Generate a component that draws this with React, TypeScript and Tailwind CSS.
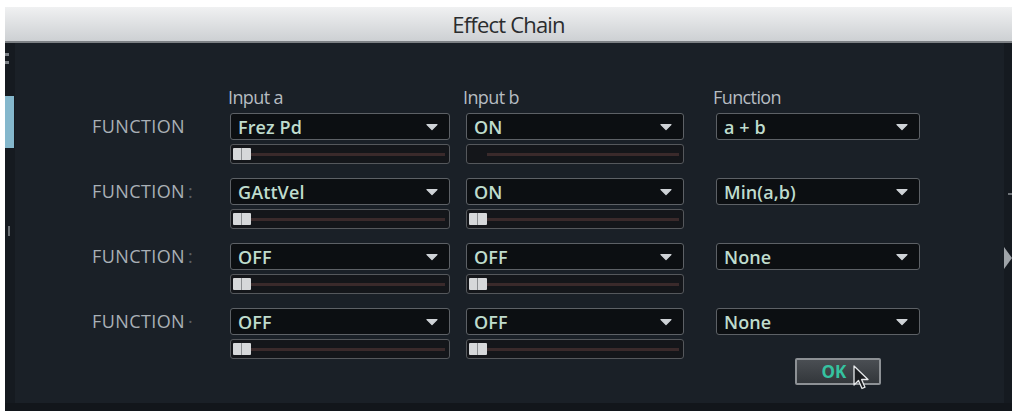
import React from 'react';

type Row = {
  label: string;
  sep: string;
  a: string;
  b: string;
  fn: string;
  knobB: boolean;
};

const rows: Row[] = [
  { label: 'FUNCTION', sep: '', a: 'Frez Pd', b: 'ON', fn: 'a + b', knobB: false },
  { label: 'FUNCTION', sep: ':', a: 'GAttVel', b: 'ON', fn: 'Min(a,b)', knobB: true },
  { label: 'FUNCTION', sep: ':', a: 'OFF', b: 'OFF', fn: 'None', knobB: true },
  { label: 'FUNCTION', sep: '·', a: 'OFF', b: 'OFF', fn: 'None', knobB: true },
];

const Arrow = () => (
  <svg width="14" height="8" viewBox="0 0 14 8" className="shrink-0">
    <path d="M2 1.5 H12 L7 6.5 Z" fill="#cfd3d7" stroke="#cfd3d7" strokeWidth="1.2" strokeLinejoin="round" />
  </svg>
);

const Dropdown = ({ value, width }: { value: string; width: string }) => (
  <div
    className={`${width} h-[27px] flex items-center justify-between pl-[7px] pr-[10px] rounded-[3px] border-[1.5px] border-[#5d6166] bg-[#0c0f12]`}
  >
    <span className="text-[18px] font-semibold text-[#bfdccd] tracking-[0.1px] leading-none">{value}</span>
    <Arrow />
  </div>
);

const Slider = ({ knob }: { knob: boolean }) => (
  <div className="w-full h-[20px] mt-[4px] flex items-center pl-[2px] pr-[4px] rounded-[3px] border-[1.5px] border-[#55585c] bg-[#14161a]">
    {knob ? (
      <div className="w-[18px] h-[12px] flex shrink-0 bg-[#d6d8da] rounded-[1px]">
        <div className="w-[8px] h-full" />
        <div className="w-[1px] h-full bg-[#8a8d90]" />
      </div>
    ) : (
      <div className="w-[18px] h-[12px] shrink-0" />
    )}
    <div className="flex-1 h-[3px] bg-[#3a2a2b]" />
  </div>
);

const App: React.FC = () => {
  return (
    <div
      className="w-[1012px] h-[415px] bg-white pt-[7px] pl-[5px] overflow-hidden"
      style={{ fontFamily: '"Open Sans", "Liberation Sans", sans-serif' }}
    >
      {/* Title bar */}
      <div className="h-[34px] flex items-center justify-center bg-gradient-to-b from-[#f0f1f2] to-[#cdd0d3]">
        <span className="text-[22px] font-medium text-[#2a2c2e] tracking-[-0.8px]">Effect Chain</span>
      </div>
      <div className="h-[2px] bg-[#7d8185]" />

      {/* Body */}
      <div className="h-[368px] flex bg-[#1a2027] relative">
        {/* window behind, left edge */}
        <div className="w-[10px] flex flex-col bg-[#151a20]">
          <div className="h-[8px]" />
          <div className="h-[3px] w-[4px] bg-[#7d8288] mt-[2px]" />
          <div className="h-[3px] w-[4px] bg-[#7d8288] mt-[5px]" />
          <div className="h-[52px] w-[9px] bg-[#84b7cc] mt-[32px]" />
          <div className="h-[10px] w-[2px] bg-[#6c7176] mt-[78px] ml-[3px]" />
        </div>

        <div className="flex-1 flex flex-col pt-[42px] pl-[77px]">
          {/* headers */}
          <div className="flex h-[22px] items-end text-[18px] text-[#b6bcc2] tracking-[-0.6px] leading-none">
            <div className="w-[136px]" />
            <div className="w-[235px] pb-[1px]">Input a</div>
            <div className="w-[250px] pb-[1px]">Input b</div>
            <div className="pb-[1px]">Function</div>
          </div>

          <div className="flex flex-col gap-[14px] mt-[6px]">
            {rows.map((r, i) => (
              <div key={i} className="flex items-start">
                <div className="w-[138px] h-[27px] flex items-center text-[18px] text-[#a9b0b6] tracking-[0.4px]">
                  {r.label}
                  {r.sep && <span className="ml-[3px] text-[#5b6167]">{r.sep}</span>}
                </div>
                <div className="w-[220px] flex flex-col">
                  <Dropdown value={r.a} width="w-[220px]" />
                  <Slider knob />
                </div>
                <div className="w-[218px] ml-[16px] flex flex-col">
                  <Dropdown value={r.b} width="w-[218px]" />
                  <Slider knob={r.knobB} />
                </div>
                <div className="ml-[32px]">
                  <Dropdown value={r.fn} width="w-[204px]" />
                </div>
              </div>
            ))}
          </div>

          {/* OK button */}
          <div className="flex pl-[703px] -mt-[1px]">
            <div className="relative w-[86px] h-[27px] flex items-center justify-center rounded-[2px] border-[2px] border-[#8d9195] bg-gradient-to-b from-[#4a4e53] to-[#33373b]">
              <span className="text-[17px] font-bold text-[#35c2a0] pr-[8px]">OK</span>
              <svg
                width="18"
                height="26"
                viewBox="0 0 18 26"
                className="absolute left-[56px] top-[5px]"
              >
                <path
                  d="M1 1 L1 20 L5.5 15.5 L9 23.5 L12 22.2 L8.6 14.5 L15 14.5 Z"
                  fill="#1b1d20"
                  stroke="#e6e8ea"
                  strokeWidth="1.3"
                  strokeLinejoin="round"
                />
              </svg>
            </div>
          </div>
        </div>

        {/* window behind, right edge */}
        <div className="w-[8px] flex flex-col items-end bg-[#151a20]">
          <div className="h-[150px]" />
          <div className="w-[4px] h-[2px] bg-[#6d7277]" />
          <div className="h-[52px]" />
          <svg width="8" height="22" viewBox="0 0 8 22">
            <path d="M0 0 L8 11 L0 22 Z" fill="#9ea3a8" />
          </svg>
        </div>

        <div className="absolute left-0 right-0 bottom-0 h-[8px] bg-[#12161b]" />
      </div>
    </div>
  );
};

export default App;
